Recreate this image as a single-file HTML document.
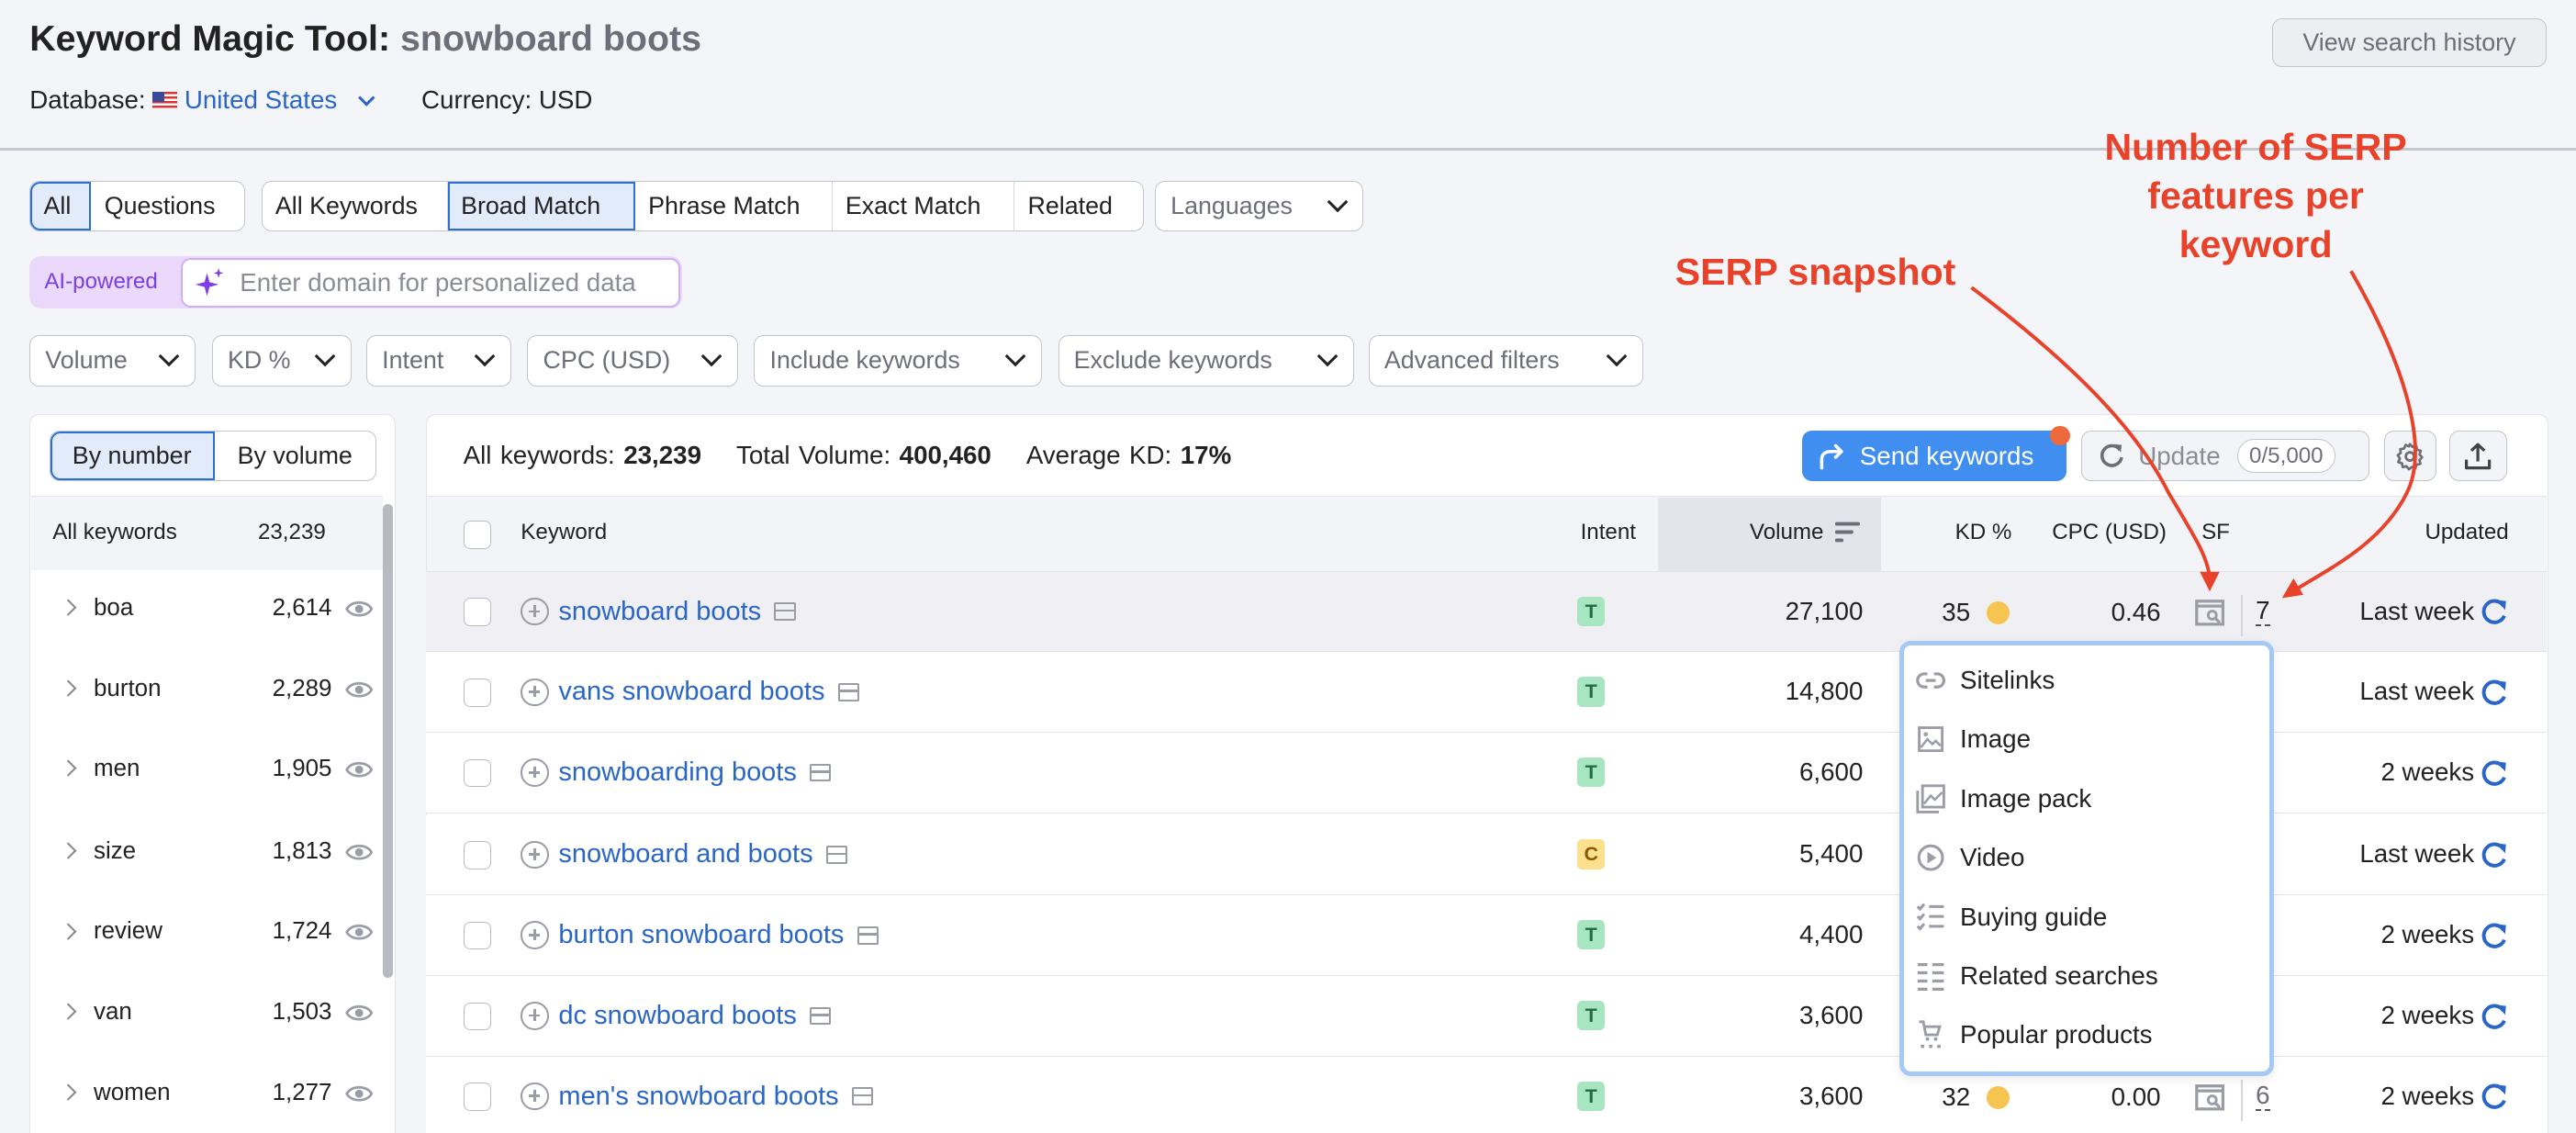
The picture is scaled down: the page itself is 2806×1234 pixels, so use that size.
<!DOCTYPE html>
<html><head><meta charset="utf-8">
<style>
*{box-sizing:border-box;margin:0;padding:0}
html,body{width:2806px;height:1234px;overflow:hidden;background:#f4f5f9}
#w{zoom:1.7896;width:1568px;height:690px;position:relative;font-family:"Liberation Sans",sans-serif;color:#222;font-size:15px;overflow:hidden}
.a{position:absolute}
.btn{position:absolute;height:31px;border:1px solid #c3c5cd;background:#fff;border-radius:6px;display:flex;align-items:center;font-size:15px;color:#222;white-space:nowrap}
.seg{height:100%;display:flex;align-items:center;padding:0 8px;border-right:1px solid #d4d6dc}
.seg:last-child{border-right:none}
.sel{background:#e2ebf9;outline:1.5px solid #2b6fd2;outline-offset:-1.5px}
.dd{color:#6c6e79;padding:0 9px;justify-content:space-between}
.chev{width:9px;height:9px;border-right:2px solid #222;border-bottom:2px solid #222;transform:rotate(45deg);margin:-5px 2px 0 10px}
.row{position:absolute;left:259px;width:1291px;height:49px;border-bottom:1px solid #e3e4e9;background:#fff}
.cb{position:absolute;left:23px;top:16px;width:17px;height:17px;border:1px solid #b9bbc3;border-radius:4px;background:#fff}
.kw{position:absolute;left:58px;top:15px;color:#2966c7;display:flex;align-items:center;gap:5px;font-size:16.2px}
.plus{width:17px;height:17px;border:1.5px solid #9a9ca6;border-radius:50%;position:relative;margin-right:1px}
.plus:before{content:"";position:absolute;left:3.5px;top:6.5px;width:7px;height:1.5px;background:#9a9ca6}
.plus:after{content:"";position:absolute;left:6.5px;top:3.5px;width:1.5px;height:7px;background:#9a9ca6}
.fold{width:13px;height:11px;border:1.5px solid #9a9ca6;border-radius:1px;position:relative;margin-left:3px}
.fold:before{content:"";position:absolute;left:0;right:0;top:3px;height:1.5px;background:#9a9ca6}
.badge{position:absolute;left:701px;top:15px;width:17px;height:18px;border-radius:3px;background:#a8e6c2;color:#1f6b43;font-size:12px;font-weight:bold;text-align:center;line-height:18px}
.vol{position:absolute;right:416px;top:15px;font-size:15.5px}
.upd{position:absolute;right:44px;top:15px;font-size:15.5px}
.lrow{position:absolute;left:18px;width:215px;height:49px;font-size:14.5px}
.lrow .c{position:absolute;left:20px;top:19px;width:7px;height:7px;border-right:1.5px solid #888;border-top:1.5px solid #888;transform:rotate(45deg)}
.lrow .t{position:absolute;left:39px;top:15px}
.lrow .n{position:absolute;right:31px;top:15px}
.lrow .e{position:absolute;right:6px;top:15px;width:17px;height:17px}
.mi{position:absolute;left:1166px;font-size:15.5px;display:flex;align-items:center}
.mi svg{width:18px;height:18px;margin-right:9px}
.red{position:absolute;color:#e8432a;font-weight:bold;font-size:23px;text-align:center;line-height:29.5px}
</style></head><body><div id="w">

<div class="a" style="left:18px;top:11px;font-size:22px;font-weight:bold">Keyword Magic Tool: <span style="color:#6c6e79">snowboard boots</span></div>
<div class="btn" style="left:1383px;top:11px;width:167px;height:30px;background:#eceef2;color:#6c6e79;justify-content:center;font-size:15px">View search history</div>
<div class="a" style="left:18px;top:52px;font-size:15.5px">Database: <span style="display:inline-block;width:15px;height:10px;background:repeating-linear-gradient(#d33 0 1.4px,#fff 1.4px 2.8px);position:relative;vertical-align:0"><span style="position:absolute;left:0;top:0;width:7px;height:6px;background:#3a4a9a"></span></span> <span style="color:#2966c7">United States</span> <span style="display:inline-block;width:7px;height:7px;border-right:2px solid #2966c7;border-bottom:2px solid #2966c7;transform:rotate(45deg);margin:0 30px 3px 10px"></span>Currency: USD</div>
<div class="a" style="left:0;top:90px;width:1568px;height:1.5px;background:#c4c7cf"></div>

<div class="btn" style="left:18px;top:110px;width:131px"><div class="seg sel" style="width:37px;border-radius:6px 0 0 6px">All</div><div class="seg">Questions</div></div>
<div class="btn" style="left:159px;top:110px;width:537px"><div class="seg" style="width:113px">All Keywords</div><div class="seg sel" style="width:114px">Broad Match</div><div class="seg" style="width:120px">Phrase Match</div><div class="seg" style="width:111px">Exact Match</div><div class="seg">Related</div></div>
<div class="btn dd" style="left:703px;top:110px;width:127px">Languages<span class="chev"></span></div>

<div class="a" style="left:18px;top:156px;width:397px;height:32px;background:#ead9fb;border-radius:7px"></div>
<div class="a" style="left:27px;top:164px;color:#7b3fe4;font-size:13.5px">AI-powered</div>
<div class="a" style="left:110px;top:157px;width:304px;height:30px;background:#fff;border:1.5px solid #cfaef5;border-radius:6px"></div>
<svg class="a" style="left:119px;top:163px" width="18" height="18" viewBox="0 0 18 18"><path d="M7 3 L8.5 8.5 L14 10 L8.5 11.5 L7 17 L5.5 11.5 L0 10 L5.5 8.5Z" fill="#7b3fe4"/><path d="M14 0 L14.7 2.3 L17 3 L14.7 3.7 L14 6 L13.3 3.7 L11 3 L13.3 2.3Z" fill="#7b3fe4"/></svg>
<div class="a" style="left:146px;top:163px;color:#8a8c96;font-size:15.5px">Enter domain for personalized data</div>

<div class="btn dd" style="left:18px;top:204px;width:101px">Volume<span class="chev"></span></div>
<div class="btn dd" style="left:129px;top:204px;width:85px">KD %<span class="chev"></span></div>
<div class="btn dd" style="left:223px;top:204px;width:88px">Intent<span class="chev"></span></div>
<div class="btn dd" style="left:321px;top:204px;width:128px">CPC (USD)<span class="chev"></span></div>
<div class="btn dd" style="left:459px;top:204px;width:175px">Include keywords<span class="chev"></span></div>
<div class="btn dd" style="left:644px;top:204px;width:180px">Exclude keywords<span class="chev"></span></div>
<div class="btn dd" style="left:833px;top:204px;width:167px">Advanced filters<span class="chev"></span></div>

<!-- left panel -->
<div class="a" style="left:18px;top:252px;width:223px;height:450px;background:#fff;border:1px solid #e3e4e9;border-radius:6px"></div>
<div class="btn" style="left:30px;top:262px;width:199px;height:31px"><div class="seg sel" style="width:100px;justify-content:center;border-radius:6px 0 0 6px">By number</div><div class="seg" style="justify-content:center;flex:1">By volume</div></div>
<div class="a" style="left:19px;top:302px;width:214px;height:45px;background:#f3f4f8;border-top:1px solid #e3e4e9"></div>
<div class="a" style="left:32px;top:316px;font-size:13.5px">All keywords</div>
<div class="a" style="left:157px;top:316px;font-size:13.5px">23,239</div>
<div class="a" style="left:233px;top:307px;width:6px;height:288px;background:#b8bac1;border-radius:3px"></div>
<div class="lrow" style="top:347px"><i class="c"></i><span class="t">boa</span><span class="n">2,614</span><svg class="e" viewBox="0 0 18 18"><path d="M1 9 C4 3.5 14 3.5 17 9 C14 14.5 4 14.5 1 9Z" fill="none" stroke="#9a9ca6" stroke-width="1.6"/><circle cx="9" cy="9" r="2.6" fill="#9a9ca6"/></svg></div>
<div class="lrow" style="top:396px"><i class="c"></i><span class="t">burton</span><span class="n">2,289</span><svg class="e" viewBox="0 0 18 18"><path d="M1 9 C4 3.5 14 3.5 17 9 C14 14.5 4 14.5 1 9Z" fill="none" stroke="#9a9ca6" stroke-width="1.6"/><circle cx="9" cy="9" r="2.6" fill="#9a9ca6"/></svg></div>
<div class="lrow" style="top:445px"><i class="c"></i><span class="t">men</span><span class="n">1,905</span><svg class="e" viewBox="0 0 18 18"><path d="M1 9 C4 3.5 14 3.5 17 9 C14 14.5 4 14.5 1 9Z" fill="none" stroke="#9a9ca6" stroke-width="1.6"/><circle cx="9" cy="9" r="2.6" fill="#9a9ca6"/></svg></div>
<div class="lrow" style="top:495px"><i class="c"></i><span class="t">size</span><span class="n">1,813</span><svg class="e" viewBox="0 0 18 18"><path d="M1 9 C4 3.5 14 3.5 17 9 C14 14.5 4 14.5 1 9Z" fill="none" stroke="#9a9ca6" stroke-width="1.6"/><circle cx="9" cy="9" r="2.6" fill="#9a9ca6"/></svg></div>
<div class="lrow" style="top:544px"><i class="c"></i><span class="t">review</span><span class="n">1,724</span><svg class="e" viewBox="0 0 18 18"><path d="M1 9 C4 3.5 14 3.5 17 9 C14 14.5 4 14.5 1 9Z" fill="none" stroke="#9a9ca6" stroke-width="1.6"/><circle cx="9" cy="9" r="2.6" fill="#9a9ca6"/></svg></div>
<div class="lrow" style="top:593px"><i class="c"></i><span class="t">van</span><span class="n">1,503</span><svg class="e" viewBox="0 0 18 18"><path d="M1 9 C4 3.5 14 3.5 17 9 C14 14.5 4 14.5 1 9Z" fill="none" stroke="#9a9ca6" stroke-width="1.6"/><circle cx="9" cy="9" r="2.6" fill="#9a9ca6"/></svg></div>
<div class="lrow" style="top:642px"><i class="c"></i><span class="t">women</span><span class="n">1,277</span><svg class="e" viewBox="0 0 18 18"><path d="M1 9 C4 3.5 14 3.5 17 9 C14 14.5 4 14.5 1 9Z" fill="none" stroke="#9a9ca6" stroke-width="1.6"/><circle cx="9" cy="9" r="2.6" fill="#9a9ca6"/></svg></div>

<!-- main panel -->
<div class="a" style="left:259px;top:252px;width:1292px;height:450px;background:#fff;border:1px solid #e3e4e9;border-radius:6px"></div>
<div class="a" style="left:282px;top:268px;font-size:15.5px;word-spacing:1px">All keywords: <b>23,239</b> &nbsp;&nbsp;&nbsp;Total Volume: <b>400,460</b> &nbsp;&nbsp;&nbsp;Average KD: <b>17%</b></div>
<div class="a" style="left:1097px;top:262px;width:161px;height:31px;background:#3f8ef0;border-radius:6px;color:#fff;font-size:15.5px;display:flex;align-items:center"><svg style="margin:0 8px 0 9px" width="18" height="18" viewBox="0 0 18 18"><path d="M3 16 V11 C3 7.5 5 6 9 6 H15 M11.5 2.5 L15 6 L11.5 9.5" fill="none" stroke="#fff" stroke-width="2" stroke-linecap="round" stroke-linejoin="round"/></svg>Send keywords</div>
<div class="a" style="left:1248px;top:259px;width:12px;height:12px;border-radius:50%;background:#ee6a3d"></div>
<div class="btn" style="left:1267px;top:262px;width:175px;background:#f3f4f7;color:#8a8c96;font-size:15.5px"><svg style="margin:0 8px 0 10px" width="16" height="16" viewBox="0 0 16 16"><path d="M13 4.5 A6 6 0 1 0 14 9" fill="none" stroke="#6c6e79" stroke-width="2"/><path d="M9.5 1 L14 1.5 L13.5 6Z" fill="#6c6e79"/></svg>Update<span style="margin-left:10px;border:1px solid #c3c5cd;border-radius:12px;background:#fff;padding:2px 7px;font-size:13.5px;color:#6c6e79">0/5,000</span></div>
<div class="btn" style="left:1451px;top:262px;width:32px;background:#f3f4f7;justify-content:center"><svg width="18" height="18" viewBox="0 0 18 18"><circle cx="9" cy="9" r="2.5" fill="none" stroke="#6c6e79" stroke-width="1.6"/><path d="M9 1.5 L10.5 3.2 L12.8 2.6 L13.3 4.9 L15.6 5.6 L14.8 7.8 L16.4 9.5 L14.8 11.2 L15.4 13.5 L13.1 14 L12.3 16.2 L10.2 15.4 L8.4 16.8 L6.9 15 L4.6 15.5 L4.2 13.2 L1.9 12.4 L2.9 10.3 L1.6 8.3 L3.4 6.9 L3.1 4.6 L5.4 4.2 L6.4 2 L8.4 2.9Z" fill="none" stroke="#6c6e79" stroke-width="1.5" stroke-linejoin="round"/></svg></div>
<div class="btn" style="left:1491px;top:262px;width:35px;background:#f3f4f7;justify-content:center"><svg width="18" height="18" viewBox="0 0 18 18"><path d="M9 12 V2 M5 5.5 L9 1.8 L13 5.5 M2 11 V16 H16 V11" fill="none" stroke="#444" stroke-width="1.8" stroke-linejoin="round"/></svg></div>

<div class="a" style="left:260px;top:302px;width:1290px;height:46px;background:#f3f4f8;border-top:1px solid #e3e4e9;border-bottom:1px solid #e3e4e9"></div>
<div class="a" style="left:1009px;top:303px;width:136px;height:45px;background:#e3e4ec"></div>
<div class="a" style="left:282px;top:317px;width:17px;height:17px;border:1px solid #b9bbc3;border-radius:4px;background:#fff"></div>
<div class="a" style="left:317px;top:316px;font-size:13.5px">Keyword</div>
<div class="a" style="left:962px;top:316px;font-size:13.5px">Intent</div>
<div class="a" style="left:1065px;top:316px;font-size:13.5px">Volume</div>
<svg class="a" style="left:1117px;top:317px" width="16" height="14" viewBox="0 0 16 14"><path d="M1 2 H14 M1 7 H10 M1 12 H4" stroke="#6c6e79" stroke-width="2.2" stroke-linecap="round"/></svg>
<div class="a" style="left:1190px;top:316px;font-size:13.5px">KD %</div>
<div class="a" style="left:1249px;top:316px;font-size:13.5px">CPC (USD)</div>
<div class="a" style="left:1340px;top:316px;font-size:13.5px">SF</div>
<div class="a" style="left:1476px;top:316px;font-size:13.5px">Updated</div>

<div class="row" style="top:348px;background:#f0f0f4"><i class="cb"></i><div class="kw"><i class="plus"></i>snowboard boots<i class="fold"></i></div><div class="badge">T</div><div class="vol">27,100</div><div class="upd">Last week</div></div>
<div class="row" style="top:397px"><i class="cb"></i><div class="kw"><i class="plus"></i>vans snowboard boots<i class="fold"></i></div><div class="badge">T</div><div class="vol">14,800</div><div class="upd">Last week</div></div>
<div class="row" style="top:446px"><i class="cb"></i><div class="kw"><i class="plus"></i>snowboarding boots<i class="fold"></i></div><div class="badge">T</div><div class="vol">6,600</div><div class="upd">2 weeks</div></div>
<div class="row" style="top:496px"><i class="cb"></i><div class="kw"><i class="plus"></i>snowboard and boots<i class="fold"></i></div><div class="badge" style="background:#fbe08d;color:#8a5a00">C</div><div class="vol">5,400</div><div class="upd">Last week</div></div>
<div class="row" style="top:545px"><i class="cb"></i><div class="kw"><i class="plus"></i>burton snowboard boots<i class="fold"></i></div><div class="badge">T</div><div class="vol">4,400</div><div class="upd">2 weeks</div></div>
<div class="row" style="top:594px"><i class="cb"></i><div class="kw"><i class="plus"></i>dc snowboard boots<i class="fold"></i></div><div class="badge">T</div><div class="vol">3,600</div><div class="upd">2 weeks</div></div>
<div class="row" style="top:643px"><i class="cb"></i><div class="kw"><i class="plus"></i>men's snowboard boots<i class="fold"></i></div><div class="badge">T</div><div class="vol">3,600</div><div class="upd">2 weeks</div></div>

<svg width="0" height="0" style="position:absolute"><defs><g id="rf"><path d="M14 5 A6.5 6.5 0 1 0 14.5 11" fill="none" stroke="#2966c7" stroke-width="2.2"/><path d="M10 1.5 L15.5 2 L15 7.5Z" fill="#2966c7"/></g></defs></svg>
<svg class="a" style="left:1510px;top:364px" width="18" height="18" viewBox="0 0 18 18"><use href="#rf"/></svg>
<svg class="a" style="left:1510px;top:413px" width="18" height="18" viewBox="0 0 18 18"><use href="#rf"/></svg>
<svg class="a" style="left:1510px;top:462px" width="18" height="18" viewBox="0 0 18 18"><use href="#rf"/></svg>
<svg class="a" style="left:1510px;top:512px" width="18" height="18" viewBox="0 0 18 18"><use href="#rf"/></svg>
<svg class="a" style="left:1510px;top:561px" width="18" height="18" viewBox="0 0 18 18"><use href="#rf"/></svg>
<svg class="a" style="left:1510px;top:610px" width="18" height="18" viewBox="0 0 18 18"><use href="#rf"/></svg>
<svg class="a" style="left:1510px;top:659px" width="18" height="18" viewBox="0 0 18 18"><use href="#rf"/></svg>

<div class="a" style="left:1182px;top:364px;font-size:15.5px">35</div><div class="a" style="left:1209px;top:366px;width:14px;height:14px;border-radius:50%;background:#f5c451"></div>
<div class="a" style="left:1285px;top:364px;font-size:15.5px">0.46</div>
<div class="a" style="left:1182px;top:659px;font-size:15.5px">32</div><div class="a" style="left:1209px;top:661px;width:14px;height:14px;border-radius:50%;background:#f5c451"></div>
<div class="a" style="left:1285px;top:659px;font-size:15.5px">0.00</div>
<svg class="a" style="left:1336px;top:365px" width="18" height="16" viewBox="0 0 18 16"><path d="M1 1 H17 V15 H1Z M1 4 H17" fill="none" stroke="#9a9ca6" stroke-width="1.8"/><circle cx="10.5" cy="9.5" r="2.5" fill="none" stroke="#9a9ca6" stroke-width="1.6"/><path d="M12.3 11.3 L15 14" stroke="#9a9ca6" stroke-width="1.8"/></svg>
<svg class="a" style="left:1336px;top:660px" width="18" height="16" viewBox="0 0 18 16"><path d="M1 1 H17 V15 H1Z M1 4 H17" fill="none" stroke="#9a9ca6" stroke-width="1.8"/><circle cx="10.5" cy="9.5" r="2.5" fill="none" stroke="#9a9ca6" stroke-width="1.6"/><path d="M12.3 11.3 L15 14" stroke="#9a9ca6" stroke-width="1.8"/></svg>
<div class="a" style="left:1364px;top:362px;width:1px;height:25px;background:#d4d6dc"></div>
<div class="a" style="left:1364px;top:657px;width:1px;height:25px;background:#d4d6dc"></div>
<div class="a" style="left:1373px;top:364px;border-bottom:1.5px dashed #555;line-height:16px;font-size:15.5px">7</div>
<div class="a" style="left:1373px;top:659px;border-bottom:1.5px dashed #555;line-height:16px;color:#6c6e79;font-size:15.5px">6</div>

<!-- dropdown -->
<div class="a" style="left:1156px;top:390px;width:228px;height:265px;background:#fff;border:3px solid #a6c8f4;border-radius:7px;box-shadow:0 2px 6px rgba(0,0,0,.08)"></div>
<div class="mi" style="top:405px"><svg viewBox="0 0 18 18"><path d="M7 5 H5 A4 4 0 0 0 5 13 H7 M11 5 H13 A4 4 0 0 1 13 13 H11 M6 9 H12" fill="none" stroke="#9a9ca6" stroke-width="1.8"/></svg>Sitelinks</div>
<div class="mi" style="top:441px"><svg viewBox="0 0 18 18"><path d="M2 2 H16 V16 H2Z" fill="none" stroke="#9a9ca6" stroke-width="1.6"/><path d="M3 14 L7 9 L10 12 L12 10 L15 13" fill="none" stroke="#9a9ca6" stroke-width="1.4"/><circle cx="6" cy="6" r="1.3" fill="#9a9ca6"/></svg>Image</div>
<div class="mi" style="top:477px"><svg viewBox="0 0 18 18"><path d="M4 1 H17 V14 H4Z M1 4 V17 H14" fill="none" stroke="#9a9ca6" stroke-width="1.6"/><path d="M5 12 L9 7 L11.5 9.5 L16 5" fill="none" stroke="#9a9ca6" stroke-width="1.4"/></svg>Image pack</div>
<div class="mi" style="top:513px"><svg viewBox="0 0 18 18"><circle cx="9" cy="9" r="7.2" fill="none" stroke="#9a9ca6" stroke-width="1.7"/><path d="M7 5.5 L12.5 9 L7 12.5Z" fill="#9a9ca6"/></svg>Video</div>
<div class="mi" style="top:549px"><svg viewBox="0 0 18 18"><path d="M1 3 L2.5 4.5 L5 1.5 M1 9 L2.5 10.5 L5 7.5 M1 15 L2.5 16.5 L5 13.5 M8 3 H17 M8 9 H17 M8 15 H17" fill="none" stroke="#9a9ca6" stroke-width="1.7"/></svg>Buying guide</div>
<div class="mi" style="top:585px"><svg viewBox="0 0 18 18"><path d="M1 2 H7 M1 7 H7 M1 12 H7 M1 17 H7 M10 2 H17 M10 7 H17 M10 12 H17 M10 17 H17" stroke="#9a9ca6" stroke-width="1.8"/></svg>Related searches</div>
<div class="mi" style="top:621px"><svg viewBox="0 0 18 18"><path d="M2 1 H4.5 L6 9 H13 L14.5 4 H5" fill="none" stroke="#9a9ca6" stroke-width="1.6"/><circle cx="7" cy="11.5" r="1.1" fill="#9a9ca6"/><circle cx="12" cy="11.5" r="1.1" fill="#9a9ca6"/><path d="M3 16 h2 M8 16 h2 M13 16 h2" stroke="#9a9ca6" stroke-width="2"/></svg>Popular products</div>

<!-- annotations -->
<div class="red" style="left:1000px;top:151px;width:210px">SERP snapshot</div>
<div class="red" style="left:1253px;top:75px;width:240px">Number of SERP<br>features per<br>keyword</div>
<svg class="a" style="left:0;top:0" width="1568" height="690" viewBox="0 0 1568 690">
<path d="M1200 175 C1260 220 1300 260 1320 300 C1338 330 1344 340 1345 352" fill="none" stroke="#e8432a" stroke-width="2.2"/>
<path d="M1339 348 L1351 348 L1345 360Z" fill="#e8432a"/>
<path d="M1431 165 C1460 215 1480 270 1465 300 C1450 330 1420 345 1397 359" fill="none" stroke="#e8432a" stroke-width="2.2"/>
<path d="M1389 364 L1396 352 L1402 362Z" fill="#e8432a"/>
</svg>
</div></body></html>
